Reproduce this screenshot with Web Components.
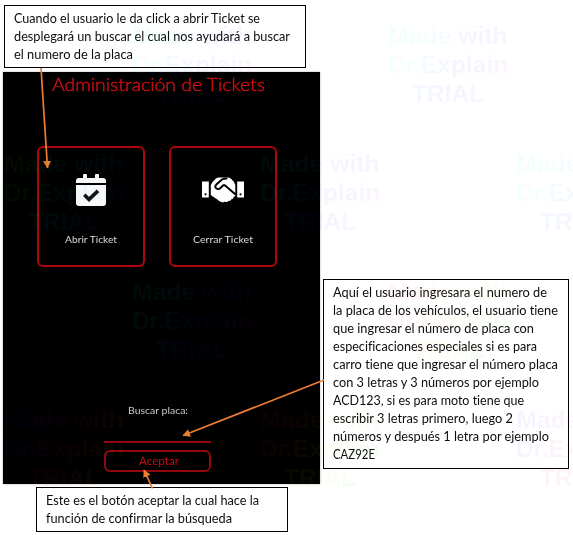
<!DOCTYPE html>
<html lang="es">
<head>
<meta charset="utf-8">
<title>Administración de Tickets</title>
<style>
html,body{margin:0;background:#fff;overflow:hidden}
</style>
</head>
<body>
<help-canvas></help-canvas>
<script>
const define = (name, html, after) => {
  const t = document.createElement('template');
  t.innerHTML = html;
  customElements.define(name, class extends HTMLElement {
    connectedCallback() {
      if (this.shadowRoot) return;
      this.attachShadow({ mode: 'open' }).append(t.content.cloneNode(true));
      if (after) after.call(this, this.shadowRoot);
    }
  });
};

/* One line of text stretched or condensed to the width given in "w". */
define('fit-line', `
<style>:host{display:block;white-space:nowrap;width:max-content;font-variant-ligatures:none}span{display:inline-block;transform-origin:0 50%}</style>
<span><slot></slot></span>`, function (root) {
  const s = root.querySelector('span');
  const w = +this.getAttribute('w');
  const natural = s.getBoundingClientRect().width;
  this.style.width = w + 'px';
  if (natural) s.style.transform = 'scaleX(' + w / natural + ')';
});

/* Bordered explanatory note. */
define('note-box', `
<style>:host{display:block;box-sizing:border-box;border:1px solid #000;background:#fff;padding:4px 0 0 8.5px;
font:13.5px/17.95px Lato,"Liberation Sans",sans-serif;color:#0c0c0c}</style><slot></slot>`);

define('icon-calendar', `
<style>:host{display:block;width:30px;height:32px}svg{display:block}</style>
<svg width="30" height="32" viewBox="0 0 30 32"><path fill="#f8f8f8" d="M0 9V7q0-3 3-3h4V1q0-1 1-1h2q1 0 1 1v3h8V1q0-1 1-1h2q1 0 1 1v3h4q3 0 3 3v2zM0 11h30V29q0 3-3 3H3q-3 0-3-3z"/><path fill="none" stroke="#111" stroke-width="3.600" d="M8.300 20.700l4.700 4.700 9-8.500"/></svg>`);

define('icon-handshake', `
<style>:host{display:block;width:42px;height:26px}svg{display:block}</style>
<svg width="42" height="26" viewBox="0 0 42 26"><g fill="#fff"><path d="M0 4.500h6.800v16H0zM35.200 4.500H42v16h-6.800z"/><path d="M8.800 8L10.500 5 14 1.500Q15.300.4 17 .4h8.500q2 0 3.500 1.400L32 5l1.300 3v11l-1.700 1q-.1 2.300-2.200 2.300-.7 2-2.800 1.500-1.600 2-3.700.6-2.400 1.800-4.600.2-1.500-.4-2.200-1.500L10.800 19.500l-2-1.500z"/></g><path fill="none" stroke="#000" stroke-width="2" stroke-linejoin="round" stroke-linecap="round" d="M24.500 1.400L22 1.800q-1.300.2-2.300 1L14.300 7.600q-2 2-.1 3.700 2 1.500 4 0L21.300 8.300h1.500L33 17"/><circle cx="3.500" cy="17.300" r="1.100" fill="#000"/><circle cx="38.500" cy="17.300" r="1.100" fill="#000"/></svg>`);

define('ticket-card', `
<style>:host{display:flex;flex-direction:column;align-items:center;justify-content:space-between;box-sizing:border-box;
width:108px;height:121px;border:2px solid #ad0509;border-radius:6px;padding:26px 0 18px;
font:9.800px/15px Lato,sans-serif;color:#d8d8d8}.i{height:32px;display:flex;align-items:center}</style>
<div class="i"><slot name="icon"></slot></div><slot></slot>`);

define('accept-button', `
<style>:host{display:block}button{display:flex;align-items:center;justify-content:center;box-sizing:border-box;width:107px;height:22px;
padding:0;margin:0;border:2px solid #92070b;border-radius:6px;background:#000;font:10.500px/14px Lato,sans-serif;color:#c40b10}</style>
<button><slot></slot></button>`);

define('ticket-panel', `
<style>
:host{display:block;box-sizing:border-box;width:317px;height:412px;background:#000;box-shadow:0 0 2px #0005}
.title{padding:1px 0 0 48.500px;height:73px;font:300 17px/24px Lato,sans-serif;color:#d20e12;-webkit-text-stroke:.4px #d20e12}
.cards{display:flex;gap:24px;padding-left:34px}
.search{display:flex;flex-direction:column;width:107px;margin:136px 0 0 101px;font:9.800px/14px Lato,sans-serif;color:#c8c8c8}
.search>fit-line{margin-left:23.500px}
.input{height:24px;border-bottom:2px solid #92070b;margin-bottom:7px}
</style>
<div class="title"><fit-line w="213">Administración de Tickets</fit-line></div>
<div class="cards">
<ticket-card><icon-calendar slot="icon"></icon-calendar><fit-line w="52">Abrir Ticket</fit-line></ticket-card>
<ticket-card><icon-handshake slot="icon"></icon-handshake><fit-line w="60">Cerrar Ticket</fit-line></ticket-card>
</div>
<div class="search"><fit-line w="60">Buscar placa:</fit-line><div class="input"></div>
<accept-button><fit-line w="40">Aceptar</fit-line></accept-button></div>`);

/* Faint trial stamp, tinted by the "tint" gradient. */
define('trial-mark', `
<style>:host{position:absolute;width:128px;height:128px;opacity:.04;pointer-events:none}
div{display:flex;flex-direction:column;align-items:center;padding-top:21px;font:bold 24.700px/29px "Liberation Sans",Arial,sans-serif;
color:transparent;background:var(--tint);-webkit-background-clip:text;background-clip:text;height:107px;white-space:nowrap}</style>
<div><span>Made with</span><span>Dr.Explain</span><span>TRIAL</span></div>`);

define('help-canvas', `
<style>
:host{display:block;position:relative;width:573px;height:535px;background:#fff;overflow:hidden}
ticket-panel,note-box,svg{position:absolute}
ticket-panel{left:3px;top:72px}
.open{left:4px;top:5px;width:302px;height:63px}
.plate{left:323px;top:279px;width:246px;height:190px;padding-left:9px}
.accept{left:36px;top:487px;width:252px;height:45px}
svg{left:0;top:0}
</style>
<ticket-panel></ticket-panel>
<note-box class="open"><fit-line w="246">Cuando el usuario le da click a abrir Ticket se</fit-line><fit-line w="276">desplegará un buscar el cual nos ayudará a buscar</fit-line><fit-line w="119">el numero de la placa</fit-line></note-box>
<note-box class="plate"><fit-line w="214">Aquí el usuario ingresara el numero de</fit-line><fit-line w="225">la placa de los vehículos, el usuario tiene</fit-line><fit-line w="201">que ingresar el número de placa con</fit-line><fit-line w="204">especificaciones especiales si es para</fit-line><fit-line w="225">carro tiene que ingresar el número placa</fit-line><fit-line w="206">con 3 letras y 3 números por ejemplo</fit-line><fit-line w="191">ACD123, si es para moto tiene que</fit-line><fit-line w="180">escribir 3 letras primero, luego 2</fit-line><fit-line w="216">números y después 1 letra por ejemplo</fit-line><fit-line w="42">CAZ92E</fit-line></note-box>
<note-box class="accept"><fit-line w="213">Este es el botón aceptar la cual hace la</fit-line><fit-line w="186">función de confirmar la búsqueda</fit-line></note-box>
<svg width="573" height="535" viewBox="0 0 573 535">
<defs><marker id="h" markerUnits="userSpaceOnUse" markerWidth="8" markerHeight="8" refX="7" refY="4" orient="auto"><path d="M0 0l7.500 4L0 8z" fill="#ed7d31"/></marker></defs>
<g stroke="#ed7d31" fill="none"><path stroke-width="1.700" d="M41 68L47.500 168" marker-end="url(#h)"/><path stroke-width="1.700" d="M324 380L183 435.500" marker-end="url(#h)"/><path stroke-width="1.700" d="M152.500 488.500L144 470" marker-end="url(#h)"/></g></svg>
<div id="marks"></div>`, function (root) {
  const cool = 'linear-gradient(120deg,#0f0,#0ff 30%,#22f 55%,#a0f 75%,#f06)';
  const warm = 'linear-gradient(120deg,#fc0,#2f0 25%,#0cf 55%,#22f 80%)';
  const rose = 'linear-gradient(120deg,#f06,#f33 25%,#fc0 50%,#0f0 80%,#0fc)';
  const blue = 'linear-gradient(120deg,#05f,#60f 25%,#f06 50%,#fc0 80%,#4f0)';
  const marks = [[128,0,cool],[384,0,cool],[0,128,warm],[256,128,cool],[512,128,cool],
    [128,256,cool],[384,256,rose],[0,384,blue],[256,384,rose],[512,384,blue]];
  for (const [x, y, tint] of marks) {
    const m = document.createElement('trial-mark');
    m.style.left = x + 'px'; m.style.top = y + 'px';
    m.style.setProperty('--tint', tint);
    root.getElementById('marks').append(m);
  }
});
</script>
</body>
</html>
